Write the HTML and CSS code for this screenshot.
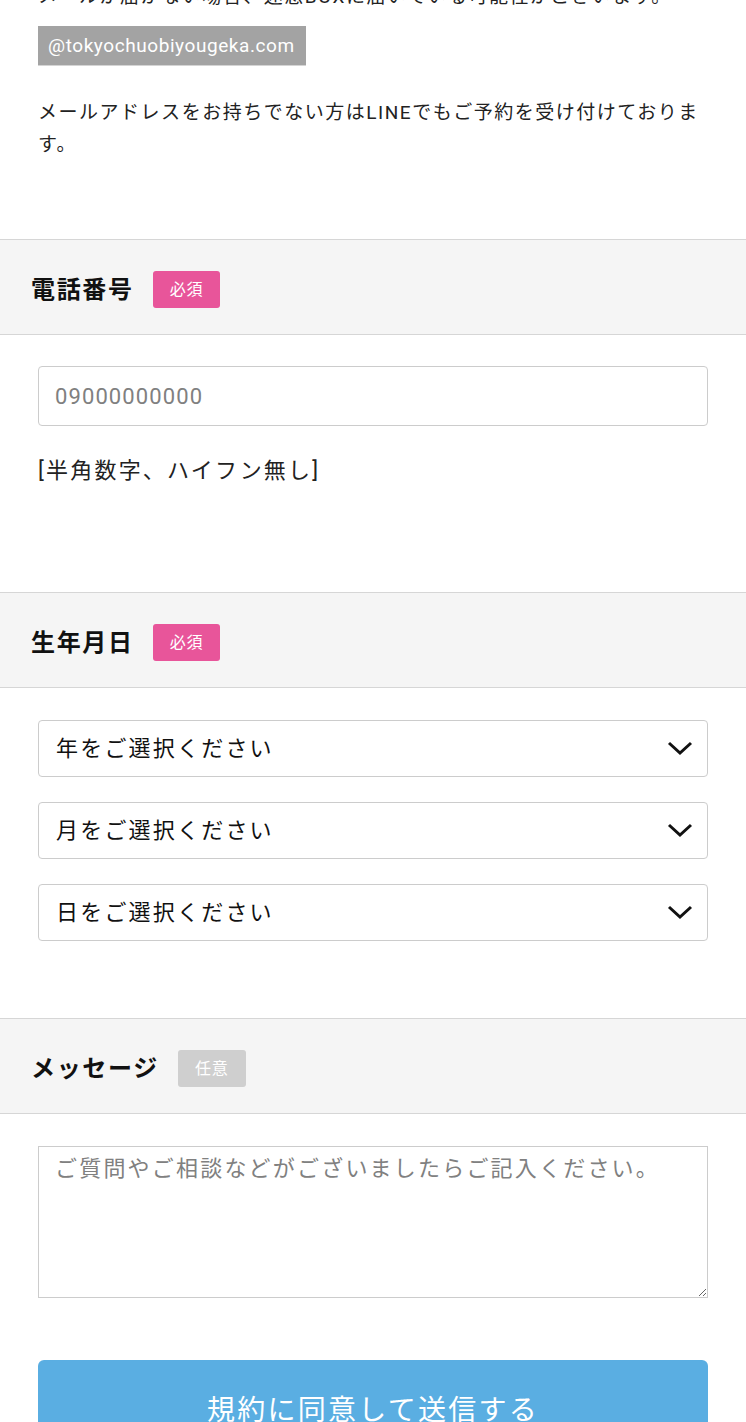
FILE: index.html
```html
<!DOCTYPE html>
<html lang="ja">
<head>
    <meta charset="UTF-8">
    <meta name="viewport" content="width=device-width, initial-scale=1.0">
    <title>ご予約フォーム</title>
    <link rel="stylesheet" href="styles.css">
</head>
<body>

    <form class="form">
        <!-- メールの注意書き -->
        <div class="intro">
            <p class="intro-text">メールが届かない場合、迷惑BOXに届いている可能性がございます。</p>
            <span class="domain">@tokyochuobiyougeka.com</span>
            <p class="intro-text intro-line">メールアドレスをお持ちでない方はLINEでもご予約を受け付けております。</p>
        </div>

        <!-- 電話番号 -->
        <div class="field-head">
            <h3 class="field-title">電話番号</h3>
            <span class="badge required">必須</span>
        </div>
        <div class="field-body">
            <input class="text-input" type="tel" placeholder="09000000000">
            <p class="note">[半角数字、ハイフン無し]</p>
        </div>

        <!-- 生年月日 -->
        <div class="field-head">
            <h3 class="field-title">生年月日</h3>
            <span class="badge required">必須</span>
        </div>
        <div class="field-body selects">
            <div class="select-wrap">
                <select class="select"><option>年をご選択ください</option></select>
                <svg class="chevron" width="26" height="16" viewBox="0 0 26 16"><polyline points="2,3 13,13 24,3" fill="none" stroke="#111" stroke-width="3"/></svg>
            </div>
            <div class="select-wrap">
                <select class="select"><option>月をご選択ください</option></select>
                <svg class="chevron" width="26" height="16" viewBox="0 0 26 16"><polyline points="2,3 13,13 24,3" fill="none" stroke="#111" stroke-width="3"/></svg>
            </div>
            <div class="select-wrap">
                <select class="select"><option>日をご選択ください</option></select>
                <svg class="chevron" width="26" height="16" viewBox="0 0 26 16"><polyline points="2,3 13,13 24,3" fill="none" stroke="#111" stroke-width="3"/></svg>
            </div>
        </div>

        <!-- メッセージ -->
        <div class="field-head">
            <h3 class="field-title">メッセージ</h3>
            <span class="badge optional">任意</span>
        </div>
        <div class="field-body last">
            <textarea class="textarea" placeholder="ご質問やご相談などがございましたらご記入ください。"></textarea>
            <button class="submit" type="button">規約に同意して送信する</button>
        </div>
    </form>

</body>
</html>
```

FILE: styles.css
```css
body {
    margin: 0;
    font-family: Roboto, "Noto Sans CJK JP", sans-serif;
    color: #222;
    background: #fff;
}
.form {
    margin: 0;
}
/* 注意書き */
.intro {
    margin-top: -19px;
    padding: 0 38px 78px;
}
.intro-text {
    margin: 0;
    font-size: 19px;
    line-height: 32px;
    letter-spacing: 0.08em;
}
.intro-line {
    margin-top: 31px;
}
.domain {
    display: inline-block;
    margin-top: 13px;
    height: 39px;
    line-height: 39px;
    padding: 0 11px 0 10px;
    background: #a3a3a3;
    border-bottom: 1px solid #d4d4d4;
    color: #fff;
    font-size: 19px;
    letter-spacing: 0.03em;
}
/* 見出し */
.field-head {
    display: flex;
    align-items: center;
    height: 94px;
    padding: 0 31px;
    background: #f5f5f5;
    border-top: 1px solid #d6d6d6;
    border-bottom: 1px solid #d6d6d6;
}
.field-title {
    margin: 0 19px 0 0;
    font-size: 24px;
    font-weight: bold;
    letter-spacing: 0.07em;
    color: #111;
}
.badge {
    display: inline-block;
    height: 37px;
    line-height: 37px;
    margin-top: 4px;
    padding: 0 17px;
    border-radius: 3px;
    color: #fff;
    font-size: 16px;
    letter-spacing: 0.05em;
}
.required {
    background: #e8559a;
}
.optional {
    background: #cfcfcf;
}
/* 入力欄 */
.field-body {
    padding: 31px 38px 77px;
}
.text-input {
    display: block;
    box-sizing: border-box;
    width: 100%;
    height: 60px;
    padding: 0 16px;
    border: 1px solid #cccccc;
    border-radius: 4px;
    font-family: inherit;
    font-size: 22px;
    letter-spacing: 0.05em;
    color: #222;
}
.text-input::placeholder, .textarea::placeholder {
    color: #808080;
}
.note {
    margin: 29px 0 28px;
    font-size: 22px;
    line-height: 32px;
    letter-spacing: 0.1em;
}
.selects {
    display: flex;
    flex-direction: column;
    gap: 25px;
    padding-top: 32px;
}
.select-wrap {
    position: relative;
}
.select {
    display: block;
    box-sizing: border-box;
    width: 100%;
    height: 57px;
    padding: 0 17px;
    border: 1px solid #cccccc;
    border-radius: 4px;
    background: #fff;
    -webkit-appearance: none;
    appearance: none;
    font-family: inherit;
    font-size: 22px;
    letter-spacing: 0.1em;
    color: #111;
}
.chevron {
    position: absolute;
    right: 15px;
    top: 20px;
    pointer-events: none;
}
.last {
    padding-top: 32px;
}
.textarea {
    display: block;
    box-sizing: border-box;
    width: 100%;
    height: 152px;
    padding: 6px 16px;
    border: 1px solid #cccccc;
    border-radius: 0;
    font-family: inherit;
    font-size: 22px;
    line-height: 32px;
    letter-spacing: 0.1em;
    color: #222;
}
.submit {
    display: block;
    width: 100%;
    height: 96px;
    margin-top: 62px;
    border: none;
    border-radius: 6px;
    background: #5aaee2;
    color: #fff;
    font-family: inherit;
    font-size: 28px;
    letter-spacing: 0.08em;
    padding: 0;
}
```
